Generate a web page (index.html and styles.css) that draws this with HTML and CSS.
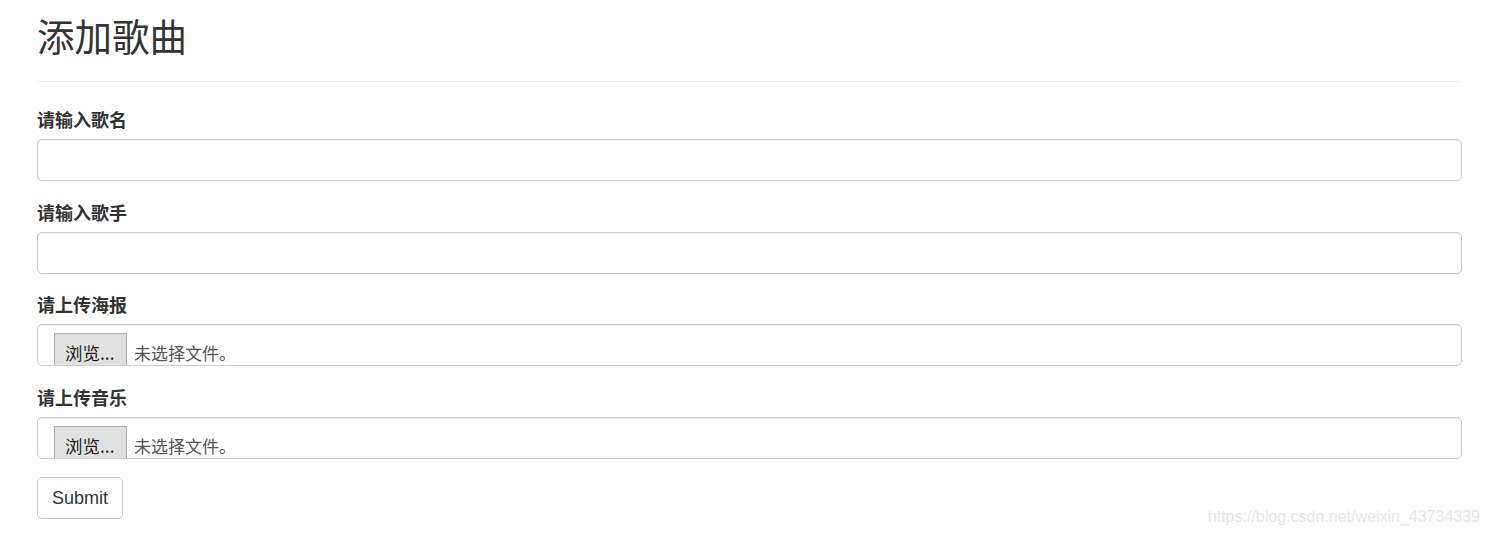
FILE: index.html
```html
<!DOCTYPE html>
<html lang="zh-CN">
<head>
<meta charset="utf-8">
<title>添加歌曲</title>
<link rel="stylesheet" href="styles.css">
</head>
<body>
<div class="container">
  <div class="page-header">
    <h1>添加歌曲</h1>
  </div>
  <form class="form">
    <div class="form-group">
      <label class="label">请输入歌名</label>
      <input class="form-control" type="text">
    </div>
    <div class="form-group">
      <label class="label">请输入歌手</label>
      <input class="form-control" type="text">
    </div>
    <div class="form-group">
      <label class="label">请上传海报</label>
      <div class="form-control file-control">
        <span class="file-btn">浏览...</span><span class="file-name">未选择文件。</span>
      </div>
    </div>
    <div class="form-group">
      <label class="label">请上传音乐</label>
      <div class="form-control file-control">
        <span class="file-btn">浏览...</span><span class="file-name">未选择文件。</span>
      </div>
    </div>
    <button class="btn" type="button">Submit</button>
  </form>
</div>
<div class="watermark">https://blog.csdn.net/weixin_43734339</div>
</body>
</html>
```
FILE: styles.css
```css
html, body {
  margin: 0;
  padding: 0;
  background: #fff;
}
body {
  font-family: "Liberation Sans", Arial, "Noto Sans CJK SC", sans-serif;
  color: #333;
  width: 1490px;
  height: 535px;
  position: relative;
  overflow: hidden;
}
.container {
  padding: 0 28px 0 37px;
}
.page-header {
  border-bottom: 1px solid #eee;
  padding-bottom: 25px;
  margin-bottom: 25px;
}
.page-header h1 {
  margin: 14px 0 0;
  font-family: "Noto Sans CJK SC", sans-serif;
  font-size: 37.5px;
  font-weight: 400;
  line-height: 42px;
  color: #333;
}
.form-group {
  margin-bottom: 18.5px;
}
.label {
  display: block;
  font-family: "Liberation Sans", Arial, "Noto Sans CJK SC", sans-serif;
  font-size: 18px;
  font-weight: 700;
  line-height: 29px;
  margin-bottom: 3px;
  color: #333;
}
.form-control {
  display: block;
  box-sizing: border-box;
  width: 100%;
  height: 42px;
  margin: 0;
  padding: 8px 15px;
  border: 1px solid #ccc;
  border-radius: 5px;
  background: #fff;
  box-shadow: inset 0 1px 1px rgba(0, 0, 0, 0.075);
  font-size: 18px;
  color: #555;
  outline: none;
}
.file-control {
  display: flex;
  align-items: flex-start;
  overflow: hidden;
  padding: 8px 16px 0;
}
.file-btn {
  flex: none;
  box-sizing: border-box;
  width: 73px;
  height: 44px;
  padding: 9px 0 0 10px;
  background: #e1e1e1;
  border: 1px solid #adadad;
  font-family: "Noto Sans CJK SC", sans-serif;
  font-size: 17.5px;
  line-height: 20px;
  color: #222;
}
.file-name {
  margin-left: 7px;
  padding-top: 10px;
  font-family: "Noto Sans CJK SC", sans-serif;
  font-size: 17px;
  line-height: 20px;
  color: #555;
}
.btn {
  display: block;
  box-sizing: border-box;
  width: 86px;
  height: 42px;
  margin: 0;
  padding: 0;
  border: 1px solid #ccc;
  border-radius: 5px;
  background: #fff;
  font-family: "Liberation Sans", Arial, sans-serif;
  font-size: 18px;
  color: #333;
  text-align: center;
}
.watermark {
  position: absolute;
  right: 10px;
  bottom: 8px;
  font-family: "Liberation Sans", Arial, sans-serif;
  font-size: 16px;
  color: #e6e6e6;
  line-height: 20px;
}
```
